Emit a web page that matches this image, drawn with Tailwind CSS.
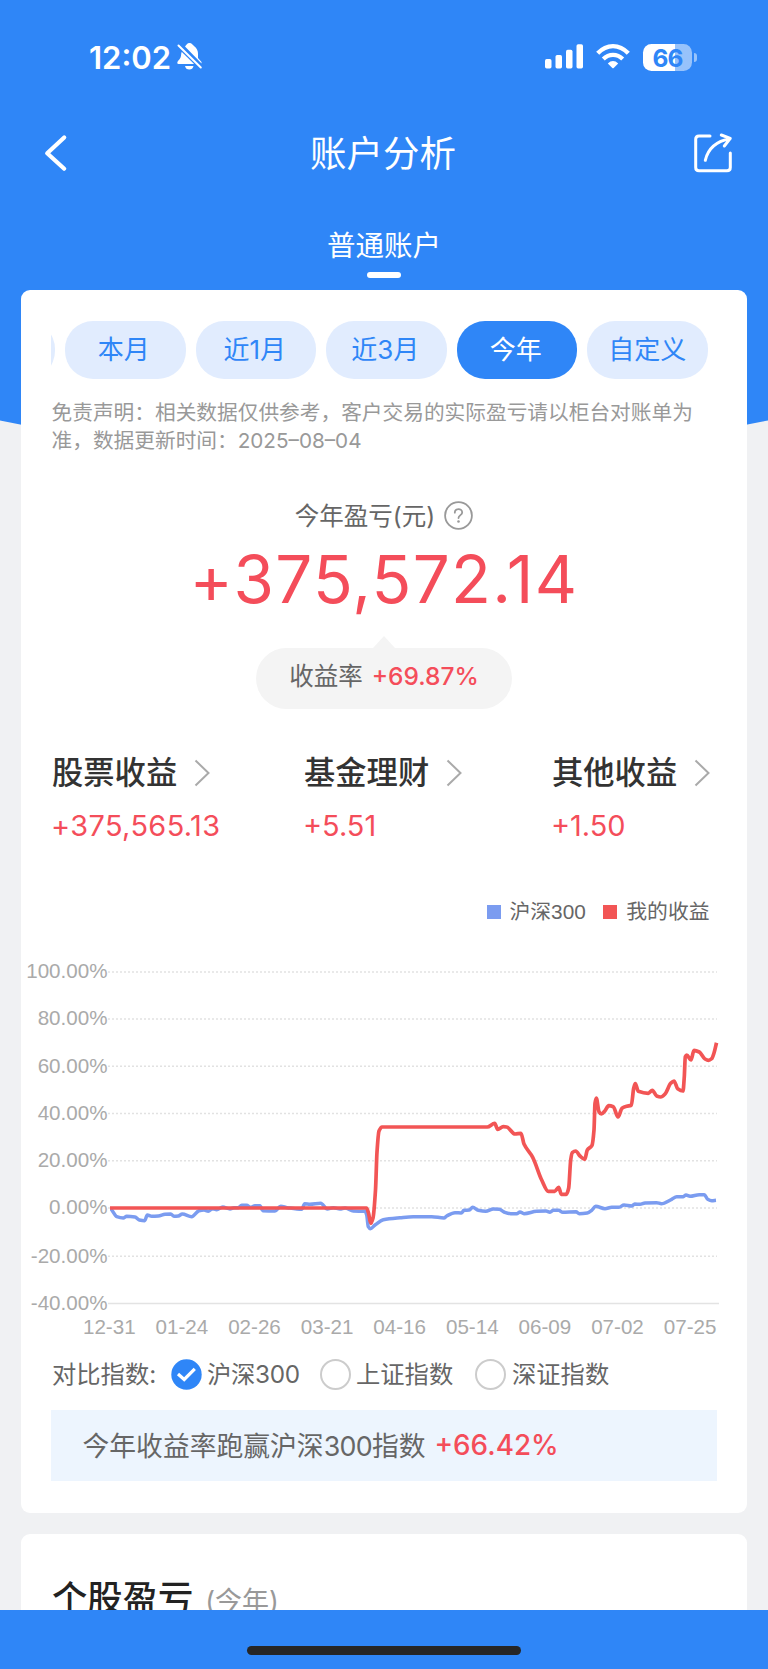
<!DOCTYPE html>
<html lang="zh-CN">
<head>
    <meta charset="UTF-8">
    <meta name="viewport" content="width=device-width, initial-scale=1.0">
    <title>账户分析</title>
    <script src="https://cdn.jsdelivr.net/npm/@tailwindcss/browser@4"></script>
</head>
<body class="relative h-[1669px] overflow-hidden bg-[#f0f1f3] font-['Inter','Noto_Sans_CJK_SC',sans-serif] whitespace-nowrap">
    <!-- Curved blue backdrop -->
    <svg class="absolute top-0 left-0 -z-10" width="768" height="470" viewBox="0 0 768 470">
        <path d="M0 0H768V420.500Q384 500 0 420.500Z" fill="#2f86f7"/>
    </svg>

    <header class="h-[290px] text-white">
        <!-- Status bar -->
        <div class="flex h-[114px] items-center justify-between pr-[71px] pl-[89px]">
            <div class="flex items-center gap-[6px]">
                <span class="w-[82px] pt-[2px] text-[31px] font-semibold">12:02</span>
                <svg width="26" height="28" viewBox="177 44 26 28" fill="white">
                    <path d="M185 47.500C186.500 46 187 44 189.500 44C192 44 192.500 46 194 47C197 49 198 52 198 55V59L201.500 63V64.500Z"/>
                    <path d="M182.800 51.500L196 65H178.500C177 65 177 63 178 62C180.500 59.500 181 58 181.200 55C181.300 53.500 182 52.500 182.800 51.500Z"/>
                    <path d="M185 67H193.500C193 69.500 191.500 70.500 189.300 70.500C187 70.500 185.500 69.500 185 67Z"/>
                    <path d="M178.500 46.500L200.800 68.500" stroke="#2f86f7" stroke-width="4.500"/>
                    <path d="M178.500 46.500L200.800 68.500" stroke="white" stroke-width="2" stroke-linecap="round"/>
                </svg>
            </div>
            <div class="flex items-center">
                <svg width="98" height="28" viewBox="545 43 98 28" fill="white">
                    <rect x="545" y="59" width="6.500" height="9.500" rx="1.700"/>
                    <rect x="555.500" y="55" width="6.500" height="13.500" rx="1.700"/>
                    <rect x="566" y="49.700" width="6.500" height="18.800" rx="1.700"/>
                    <rect x="576.500" y="44.200" width="6.500" height="24.300" rx="1.700"/>
                    <g fill="none" stroke="white" stroke-width="4.300">
                        <path d="M597.700 53.300Q604.500 46.100 613 46.100Q621.500 46.100 628.300 53.300"/>
                        <path d="M603.300 59Q607.500 54.900 613 54.900Q618.500 54.900 622.700 59"/>
                    </g>
                    <path d="M607.800 63.500Q613 58.700 618.200 63.500L613.700 67.900Q613 68.500 612.300 67.900Z"/>
                </svg>
                <div class="flex h-[27px] w-[49px] items-center justify-center rounded-[8.5px] bg-linear-to-r from-white from-[66%] to-white/50 to-[66%] pt-px text-[24.5px] leading-[26px] font-bold text-[#2f86f7] tracking-[-0.8px]">66</div>
                <div class="ml-[2px] h-[9px] w-[3px] rounded-r-full bg-white/50"></div>
            </div>
        </div>

        <!-- Title bar -->
        <div class="flex h-[78px] items-center justify-between pr-[35px] pl-[44px]">
            <svg class="mr-[-11px]" width="40" height="40" viewBox="44 133 40 40" fill="none" stroke="white" stroke-width="4.200" stroke-linecap="round" stroke-linejoin="round">
                <path d="M64.200 137.500L47.200 153.300L64.200 168.700"/>
            </svg>
            <h1 class="pt-[2px] text-[36.5px] leading-[76px]">账户分析</h1>
            <svg width="40" height="40" viewBox="693 134 40 40" fill="none" stroke="white" stroke-width="3" stroke-linecap="round" stroke-linejoin="round">
                <path d="M710 137H699Q695.700 137 695.700 140.300V168.500Q695.700 171.800 699 171.800H727Q730.300 171.800 730.300 168.500V154"/>
                <path d="M705.300 161.300Q709.500 143.500 730 139.800M721.300 136L730.300 139.300L724.300 147"/>
            </svg>
        </div>

        <div class="flex flex-col items-center pt-[34px]">
            <span class="text-[28.5px] leading-[40px]">普通账户</span>
            <span class="mt-[6px] h-[6px] w-[34px] rounded-[3px] bg-white"></span>
        </div>
    </header>

    <main class="px-[21px]">
        <section class="h-[1223px] rounded-[9px] bg-white pt-[31px]">
            <!-- Period tabs -->
            <div class="mx-[30px] flex h-[58px] justify-end gap-[10px] overflow-hidden pr-[9.5px] text-[26px] leading-[58px] text-[#2f86f7]">
                <span class="w-[120.5px] shrink-0 rounded-[28px] bg-[#e1ecfe]"></span>
                <span class="w-[120.5px] shrink-0 rounded-[28px] bg-[#e1ecfe] pr-[3px] text-center">本月</span>
                <span class="w-[120.5px] shrink-0 rounded-[28px] bg-[#e1ecfe] pr-[2px] text-center">近1月</span>
                <span class="w-[120.5px] shrink-0 rounded-[28px] bg-[#e1ecfe] pr-[2px] text-center">近3月</span>
                <span class="w-[120.5px] shrink-0 rounded-[28px] bg-[#2f86f7] pr-[2px] text-center text-white">今年</span>
                <span class="w-[120.5px] shrink-0 rounded-[28px] bg-[#e1ecfe] text-center">自定义</span>
            </div>

            <p class="mt-[20px] pl-[30.5px] text-[20.7px] leading-[28px] text-[#999]">免责声明：相关数据仅供参考，客户交易的实际盈亏请以柜台对账单为<br>准，数据更新时间：2025–08–04</p>

            <!-- Total profit -->
            <div class="mt-[41px] flex h-[38px] items-center justify-center gap-[9px]">
                <span class="pt-[2px] text-[24.5px] text-[#666]">今年盈亏(元)</span>
                <svg width="29" height="29" viewBox="0 0 29 29" fill="none" stroke="#999" stroke-width="1.800">
                    <circle cx="14.500" cy="14.500" r="13.400"/>
                    <path d="M10.800 11.700C10.800 6.800 18.200 7 18.200 11.400C18.200 14 14.500 14.200 14.500 17" stroke-linecap="round"/>
                    <circle cx="14.500" cy="20.500" r="1.300" fill="#999" stroke="none"/>
                </svg>
            </div>
            <div class="h-[102px] text-center text-[65.5px] leading-[91px] tracking-[1.3px] text-[#f44d5a]">+375,572.14</div>
            <div class="flex flex-col items-center">
                <svg width="22" height="12" viewBox="0 0 22 12" fill="#f4f4f4"><path d="M0 12L11 0L22 12Z"/></svg>
                <div class="flex h-[61px] w-[256px] items-center justify-center gap-[9px] rounded-full bg-[#f4f4f4] pb-[4px]">
                    <span class="text-[24.5px] text-[#666]">收益率</span>
                    <span class="text-[24.5px] font-medium text-[#f44d5a]">+69.87%</span>
                </div>
            </div>

            <!-- Profit by type -->
            <div class="mt-[40px] grid h-[110px] grid-cols-[252px_248px_1fr] pl-[31px]">
                <div>
                    <div class="flex h-[48px] items-center gap-[17px]">
                        <span class="pt-px text-[31.3px] font-medium text-[#333]">股票收益</span>
                        <svg width="16" height="28" viewBox="0 0 16 28" fill="none" stroke="#aaa" stroke-width="2"><path d="M1.500 1.500L14.500 14L1.500 26.500"/></svg>
                    </div>
                    <div class="-ml-px text-[28.9px] leading-[57px] tracking-[0.4px] text-[#f44d5a]">+375,565.13</div>
                </div>
                <div>
                    <div class="flex h-[48px] items-center gap-[17px]">
                        <span class="pt-px text-[31.3px] font-medium text-[#333]">基金理财</span>
                        <svg width="16" height="28" viewBox="0 0 16 28" fill="none" stroke="#aaa" stroke-width="2"><path d="M1.500 1.500L14.500 14L1.500 26.500"/></svg>
                    </div>
                    <div class="-ml-px text-[28.9px] leading-[57px] text-[#f44d5a]">+5.51</div>
                </div>
                <div>
                    <div class="flex h-[48px] items-center gap-[17px]">
                        <span class="pt-px text-[31.3px] font-medium text-[#333]">其他收益</span>
                        <svg width="16" height="28" viewBox="0 0 16 28" fill="none" stroke="#aaa" stroke-width="2"><path d="M1.500 1.500L14.500 14L1.500 26.500"/></svg>
                    </div>
                    <div class="-ml-px text-[28.9px] leading-[57px] text-[#f44d5a]">+1.50</div>
                </div>
            </div>

            <!-- Legend -->
            <div class="mt-[38px] flex h-[30px] items-center justify-end pr-[37.5px] font-['Liberation_Sans','Noto_Sans_CJK_SC',sans-serif] text-[20.8px] text-[#666]">
                <span class="mr-[9px] h-[14px] w-[14px] bg-[#7b9cf0]"></span>沪深300
                <span class="mr-[9px] ml-[17.5px] h-[14px] w-[14px] bg-[#f25555]"></span>我的收益
            </div>

            <svg id="chart" width="726" height="413" viewBox="21 927 726 413" class="block font-['Liberation_Sans',sans-serif]" font-size="20.6" fill="#aaa"></svg>

            <!-- Index picker -->
            <div class="mt-[16px] flex h-[36px] items-center pl-[31px] text-[24.3px] text-[#666]">
                <span class="w-[119px]">对比指数:</span>
                <svg class="mr-[5px]" width="31" height="31" viewBox="0 0 31 31">
                    <circle cx="15.500" cy="15.500" r="15.200" fill="#2f86f7"/>
                    <path d="M7 15L13.200 20.500L23.800 9.800" fill="none" stroke="white" stroke-width="3.200"/>
                </svg>
                <span class="w-[113px] tracking-[-0.3px]">沪深300</span>
                <span class="mr-[5px] h-[31px] w-[31px] rounded-full border-2 border-[#ccc]"></span>
                <span class="w-[119px]">上证指数</span>
                <span class="mr-[6px] h-[31px] w-[31px] rounded-full border-2 border-[#ccc]"></span>
                <span>深证指数</span>
            </div>

            <div class="mx-[30px] mt-[18px] flex h-[71px] items-center bg-[#edf5fe] pt-[2px] pl-[31.5px] text-[26.8px] text-[#666]">
                <span>今年收益率跑赢沪深<span class="tracking-[-0.7px]">300</span>指数</span><span class="ml-[9px] pb-[2px] text-[27.8px] font-medium text-[#f44d5a]">+66.42%</span>
            </div>
        </section>

        <section class="mt-[21px] h-[135px] rounded-t-[9px] bg-white pt-[39px] pl-[31px]">
            <h2 class="flex items-baseline gap-[12px] text-[35.3px] leading-[52px] font-medium text-[#222]">个股盈亏<span class="text-[27px] font-normal text-[#999]">(今年)</span></h2>
        </section>
    </main>

    <!-- Bottom safe area -->
    <footer class="absolute inset-x-0 bottom-0 flex h-[59px] justify-center bg-[#2f86f7] pt-[36px]">
        <div class="h-[9px] w-[274px] rounded-full bg-[#262626]"></div>
    </footer>

    <script>
        const index300 = [[110,1208.7],[116.7,1216.7],[123.3,1218],[126.7,1216.3],[135,1217],[139.3,1220],[144.7,1220.7],[147.3,1215],[151.7,1216.3],[158.3,1216],[165,1214.3],[170.7,1214],[174,1216.3],[178.3,1216],[182.3,1214],[191.7,1216.7],[199,1210.7],[204,1210],[208.3,1211.3],[212.3,1208.7],[216.7,1209.7],[222.7,1207],[230,1209],[234,1207.7],[238.3,1207.7],[241.7,1205.3],[246.7,1205.3],[250.7,1207.3],[255,1205.7],[260,1205.7],[262.7,1210.7],[275,1211],[280.7,1206.3],[287.3,1207.7],[301.7,1209.3],[304.7,1203.7],[310,1204.3],[320.7,1203.3],[327.3,1209],[333.3,1207.7],[340,1209],[345,1208],[353.3,1211],[365,1211.3],[366.7,1215],[368.3,1226.7],[370.3,1228.7],[375,1225],[383.3,1219.7],[400,1217.7],[413.3,1216.7],[431.7,1216.7],[444,1218],[446.7,1216],[455,1212.7],[461.3,1213],[464,1210.3],[469.3,1210],[472.7,1207.3],[478.3,1210.3],[485.7,1211.3],[493.3,1209],[499.3,1209.3],[504,1212],[510.7,1213.7],[516.7,1213.7],[520,1212],[524,1213.7],[536.7,1211.3],[546,1211],[550,1212.3],[553.3,1210.3],[558.7,1210.3],[562.7,1212.3],[576,1211.7],[579.3,1213.7],[587.3,1213],[591.7,1210.3],[595.7,1206.3],[605,1208.7],[611.7,1207.3],[619,1207.3],[624,1205],[631.7,1206],[634.7,1204],[640,1204.3],[645,1203],[656.7,1202.7],[661.3,1203.7],[671.7,1199.3],[676.7,1196.7],[683.3,1196.7],[686,1195],[690,1196.3],[699.3,1194.7],[704.3,1194.7],[707.7,1199.3],[711.7,1200.7],[716,1200.3]];
        const mine = [[110,1208],[366.5,1208],[368.5,1213],[370.7,1223.3],[373,1218],[375.5,1190],[377,1152],[379,1131],[382,1127],[487.3,1127],[494.7,1123.3],[497.7,1129.3],[503.3,1126.7],[506.7,1127],[515,1134],[521,1133.3],[524,1144],[532.7,1157.3],[541.7,1180],[548.3,1191.3],[554.7,1191.3],[558.7,1187.3],[561.3,1194.3],[566.3,1194.3],[568.7,1188],[570.7,1160],[572.3,1152.7],[575.7,1151],[580,1156],[584.7,1159.3],[587.3,1150],[592,1145.3],[594,1130],[595,1103.3],[596.3,1098],[599,1111.7],[601.3,1114],[605,1110.7],[608.7,1105.7],[613.3,1106.7],[618,1117],[622,1108.3],[626.7,1106.3],[631.3,1105.3],[633.7,1088.3],[635.3,1083.7],[638.3,1091.3],[648.3,1093.3],[652.3,1090.3],[656.7,1096],[660.7,1097],[665,1094],[670.7,1083.3],[674,1081],[677.7,1088.7],[683,1091],[684.3,1076.7],[685.3,1056.7],[686.7,1055],[691,1060],[694,1050.3],[699.3,1052],[705,1059],[708.5,1060.3],[711.7,1058.7],[714,1053],[716.5,1042.7]];

        // smooth line that never overshoots a peak
        function smooth(p) {
            const m = p.map((c, i) => {
                if (i === 0 || i === p.length - 1) return 0;
                const a = (c[1] - p[i - 1][1]) / (c[0] - p[i - 1][0]);
                const b = (p[i + 1][1] - c[1]) / (p[i + 1][0] - c[0]);
                return a * b <= 0 ? 0 : 2 * a * b / (a + b);
            });
            // leave the last point at the slope of its segment
            const [q, e] = p.slice(-2);
            m[m.length - 1] = (e[1] - q[1]) / (e[0] - q[0]);
            let d = `M${p[0][0]} ${p[0][1]}`;
            for (let i = 1; i < p.length; i++) {
                const h = (p[i][0] - p[i - 1][0]) / 3;
                d += `C${p[i - 1][0] + h} ${p[i - 1][1] + m[i - 1] * h} ${p[i][0] - h} ${p[i][1] - m[i] * h} ${p[i][0]} ${p[i][1]}`;
            }
            return d;
        }

        let svg = '';
        const rows = [['100.00%', 972], ['80.00%', 1019], ['60.00%', 1066.3], ['40.00%', 1113.5], ['20.00%', 1160.7], ['0.00%', 1208], ['-20.00%', 1256.3], ['-40.00%', 1303.5]];
        rows.forEach(([label, y], i) => {
            const last = i === rows.length - 1;
            svg += `<path d="M108 ${y}H${last ? 719 : 717}" stroke="${last ? '#e3e3e3' : '#e2e2e2'}" stroke-width="1.500" ${last ? '' : 'stroke-dasharray="2 2"'}/>`;
            svg += `<text x="107.500" y="${y + 6.3}" text-anchor="end">${label}</text>`;
        });
        ['12-31', '01-24', '02-26', '03-21', '04-16', '05-14', '06-09', '07-02', '07-25'].forEach((label, i) => {
            svg += `<text x="${109.3 + i * 72.6}" y="1334" text-anchor="middle">${label}</text>`;
        });
        svg += `<path d="${smooth(index300)}" fill="none" stroke="#7b9cf0" stroke-width="3.500" stroke-linejoin="round"/>`;
        svg += `<path d="${smooth(mine)}" fill="none" stroke="#f25555" stroke-width="3.700" stroke-linejoin="round"/>`;
        document.getElementById('chart').innerHTML = svg;
    </script>
</body>
</html>
